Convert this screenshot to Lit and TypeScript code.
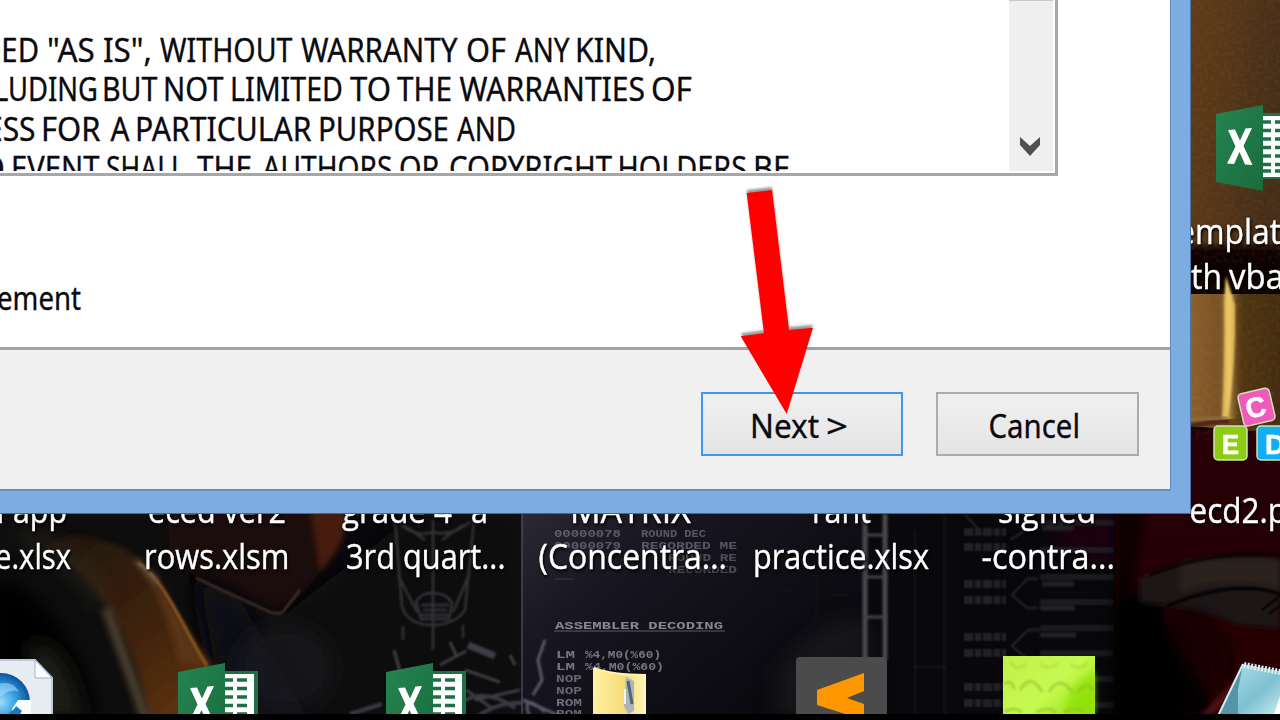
import { LitElement, html, svg, css } from "lit";
import { customElement, property } from "lit/decorators.js";

type Word = [string, number, number];

/** One line of dialog text; each word is fitted between its start and end. */
@customElement("fit-line")
class FitLine extends LitElement {
  @property({ attribute: false }) words: Word[] = [];
  @property({ type: Number }) baseline = 30;
  @property({ type: Number }) box = 40;

  static styles = css`
    :host { display: block; }
    svg { display: block; width: 100%; overflow: visible; }
    text { font-family: "Noto Sans", "Open Sans", sans-serif; font-size: 33.5px; fill: #0a0a10; stroke: #0a0a10; stroke-width: 0.35px; }
  `;

  render() {
    return html`<svg height=${this.box}>
      ${this.words.map(([t, a, b]) => svg`<text x=${a} y=${this.baseline} textLength=${b - a} lengthAdjust="spacingAndGlyphs">${t}</text>`)}
    </svg>`;
  }
}

const license: Word[][] = [
  [["DED", -20, 39], ['"AS IS",', 47, 152], ["WITHOUT", 160, 292.5], ["WARRANTY", 301, 457.5], ["OF", 466, 506], ["ANY", 515, 569.5], ["KIND,", 575, 656]],
  [["LUDING", -6, 98], ["BUT", 102, 157.5], ["NOT", 163, 223.500], ["LIMITED", 230, 343], ["TO", 350, 391], ["THE", 397, 452], ["WARRANTIES", 459.5, 645], ["OF", 651, 692]],
  [["ESS", -14, 35.5], ["FOR", 41, 100.5], ["A", 110.5, 129.5], ["PARTICULAR", 135, 311.5], ["PURPOSE", 318, 449], ["AND", 457, 516]],
  [["O", -21, 5], ["EVENT", 11, 99.5], ["SHALL", 106, 185], ["THE", 197, 252], ["AUTHORS", 262.5, 392.5], ["OR", 399, 439.5], ["COPYRIGHT", 449, 612], ["HOLDERS", 617.5, 747], ["BE", 753, 790]],
];

const excel = (x: number, y: number) => svg`
  <g transform="translate(${x} ${y})">
    <rect x="44" y="9" width="36" height="66" fill="#1e7145"/>
    <rect x="44" y="12" width="32" height="61" fill="#fff"/>
    <path d="M47 18h8M47 26.500h8M47 35h8M47 43.500h8M47 52h8M47 60.500h8M47 67h8M59 18h10M59 26.500h10M59 35h10M59 43.500h10M59 52h10M59 60.500h10M59 67h10" stroke="#1e7145" stroke-width="3.600"/>
    <path d="M0 10L47 1V87L0 78Z" fill="url(#xl)"/>
    <path d="M12 26l7-.5 5 11 5.500-12 6.500-.5-8.500 18 9 19-7.500-.5-5.500-12.500-5.500 12-7-.5 8.500-17z" fill="#fff"/>
  </g>`;

const labels: [string, number, number, number][] = [
  ["n", -14, 4, 523], ["app", 13, 67, 523], ["eced ver2", 148, 286, 523],
  ["grade 4", 342, 452, 523], ["a", 471, 488, 523], ["MATRIX", 570, 691, 523],
  ["rant", 812, 871, 523], ["signed", 998, 1096, 523],
  ["e.xlsx", -5, 71, 568.5], ["rows.xlsm", 144, 289.500, 568.5], ["3rd quart...", 346, 505.5, 568.5],
  ["(Concentra...", 538.500, 727, 568.5], ["practice.xlsx", 753, 929, 568.5], ["-contra...", 981.5, 1115, 568.5],
  ["emplate", 1177, 1299, 243.5], ["th", 1191, 1222, 288.5], ["vba", 1229, 1284, 288.5],
  ["ecd2.p", 1189.5, 1287, 523],
];

const code: [string, number, number, number, number][] = [
  ["00000078", 554, 621, 537, 0.4], ["ROUND DEC", 641, 706, 537, 0.4],
  ["00000079", 554, 621, 549, 0.4], ["RECORDED ME", 641, 737, 549, 0.4],
  ["ROUND RE", 668, 737, 561, 0.35], ["RECORDED", 668, 737, 573, 0.35],
  ["LM", 556, 575, 658, 0.6], ["%4,M0(%60)", 585, 661, 658, 0.6],
  ["LM", 556, 575, 670, 0.6], ["%4,M0(%60)", 585, 664, 670, 0.6],
  ["NOP", 556, 582, 682, 0.5], ["NOP", 556, 582, 694, 0.5],
  ["ROM", 556, 582, 706, 0.55], ["ROM", 556, 582, 717, 0.5],
];

@customElement("app-root")
class AppRoot extends LitElement {
  static styles = css`
    :host { display: block; position: relative; width: 1280px; height: 720px; overflow: hidden; background: #08070b; }
    .desktop { position: absolute; inset: 0; display: block; }
    .desktop .label { font-family: "Open Sans", "Noto Sans", sans-serif; font-size: 34.5px; fill: #fff; stroke: #fff; stroke-width: 0.4px; filter: drop-shadow(1px 2px 1.5px #000); }
    .desktop .code { font-family: "Liberation Mono", monospace; font-weight: bold; font-size: 10.500px; fill: #b9b7c4; filter: blur(0.6px); }
    .desktop .tile { font-family: "Liberation Sans", sans-serif; font-weight: bold; fill: #fff; stroke: #fff; stroke-width: 0.6px; }
    .window { position: relative; box-sizing: border-box; width: 1191px; height: 514px; padding: 0 19.500px 24px 0; background: #7cace2; border-right: 1px solid #4d76a5; border-bottom: 1px solid #46668f; }
    .client { box-sizing: border-box; height: 491px; display: flex; flex-direction: column; background: #fff; border-right: 1px solid #618bbd; border-bottom: 2px solid #668eb9; }
    .page { height: 347px; flex: none; }
    .license { box-sizing: border-box; width: 1058px; height: 176px; display: flex; border-right: 3px solid #a7a7a7; border-bottom: 3px solid #a7a7a7; }
    .copy { flex: 1; height: 171px; padding-top: 24px; box-sizing: border-box; overflow: hidden; }
    .copy fit-line { height: 39.3px; }
    .scroll { box-sizing: border-box; width: 44px; height: 171px; margin-right: 2px; background: #efefef; border-top: 1px solid #c8c8c8; display: flex; align-items: flex-end; justify-content: center; padding: 0 3px 15px 0; }
    .accept { padding-top: 103px; }
    .footer { flex: 1; box-sizing: border-box; display: flex; justify-content: flex-end; gap: 33px; padding: 42px 31px 0 0; border-top: 3px solid #a3a3a3; background: #f0f0f0; }
    .button { box-sizing: border-box; width: 202.500px; height: 64px; margin: 0; padding: 0; border: 2px solid #acacac; background: linear-gradient(#f0f0f0, #e4e4e4); text-align: left; }
    .button.primary { border-color: #3c97f2; }
    .arrow { position: absolute; left: 730px; top: 180px; display: block; filter: drop-shadow(0 -3px 1px rgba(0, 0, 0, 0.4)); }
    .bottom { position: absolute; inset: 714px 0 0 0; background: #000; }
  `;

  wallpaper() {
    return svg`
      <defs>
        <linearGradient id="xl" x2="1" y2="1"><stop stop-color="#248551"/><stop offset="1" stop-color="#1a6b3d"/></linearGradient>
        <linearGradient id="wood" x2="1" y2=".3"><stop stop-color="#603c15"/><stop offset=".5" stop-color="#543518"/><stop offset="1" stop-color="#452d17"/></linearGradient>
        <linearGradient id="gold" x2="1"><stop stop-color="#8a602b"/><stop offset=".35" stop-color="#765024"/><stop offset=".6" stop-color="#4f340f"/><stop offset="1" stop-color="#432b10"/></linearGradient>
        <linearGradient id="beam" x2="1"><stop stop-color="#7a5522" stop-opacity="0"/><stop offset=".5" stop-color="#f3d070"/><stop offset="1" stop-color="#71501f" stop-opacity="0"/></linearGradient>
        <linearGradient id="horn" x1="0" y1="0" x2=".7" y2="1"><stop stop-color="#1f160b"/><stop offset=".6" stop-color="#3d220d"/><stop offset="1" stop-color="#5c3110"/></linearGradient>
        <linearGradient id="slate" x2="1" y2=".7"><stop stop-color="#2b2933"/><stop offset=".3" stop-color="#181722"/><stop offset="1" stop-color="#07070b"/></linearGradient>
        <linearGradient id="red" y2="1" x2="0"><stop stop-color="#270006"/><stop offset="1" stop-color="#210003"/></linearGradient>
        <radialGradient id="orb"><stop stop-color="#9bdcff"/><stop offset=".55" stop-color="#2f9ade"/><stop offset="1" stop-color="#0b539e"/></radialGradient>
        <linearGradient id="note" x2="1" y2="1"><stop stop-color="#b9e5ee"/><stop offset=".6" stop-color="#7dc0d0"/><stop offset="1" stop-color="#d6f1f5"/></linearGradient>
        <linearGradient id="lime" x2="1" y2=".7"><stop stop-color="#c2ef4b"/><stop offset=".6" stop-color="#c6fa50"/><stop offset="1" stop-color="#9be313"/></linearGradient>
        <linearGradient id="zip" x2="1"><stop stop-color="#fff0a3"/><stop offset=".6" stop-color="#f5dc76"/><stop offset="1" stop-color="#fff6be"/></linearGradient>
        <filter id="b1"><feGaussianBlur stdDeviation="1"/></filter>
        <filter id="b3" x="-30%" y="-30%" width="160%" height="160%"><feGaussianBlur stdDeviation="3"/></filter>
        <filter id="b9" x="-40%" y="-40%" width="180%" height="180%"><feGaussianBlur stdDeviation="10"/></filter>
        <filter id="grain"><feTurbulence type="fractalNoise" baseFrequency=".25" numOctaves="2"/><feColorMatrix values="0 0 0 0 .7  0 0 0 0 .5  0 0 0 0 .3  .6 0 0 0 -.2"/></filter>
        <clipPath id="left"><rect y="510" width="522" height="210"/></clipPath>
      </defs>
      <rect width="1280" height="720" fill="#09080c"/>
      <g clip-path="url(#left)">
        <path d="M0 510H170L230 720H0Z" fill="#100f0c" filter="url(#b9)"/>
        <path d="M-10 575Q65 590 100 720H-10Z" fill="#000" filter="url(#b9)"/>
        <path d="M30 640Q70 640 85 720H30Z" fill="#1a1a15" filter="url(#b9)"/>
        <path d="M170 510H350Q330 575 280 614L168 563Z" fill="#1a0f0a" filter="url(#b3)"/>
        <path d="M310 510H352Q340 555 320 572Z" fill="#451f07" filter="url(#b3)"/>
        <path d="M190 575L280 618L420 510H522V720H215Z" fill="#0b0a10" filter="url(#b9)"/>
        <path d="M200 580L240 600L310 720H225Z" fill="#101019" filter="url(#b9)"/>
        <ellipse cx="285" cy="668" rx="50" ry="45" fill="#1b1a24" opacity=".6" filter="url(#b9)"/>
        <path d="M196 578L270 612Q282 616 286 608L300 590" fill="none" stroke="#43302a" stroke-width="2.500" filter="url(#b1)"/>
        <path d="M75 535Q130 545 138 560L215 670L205 720H148Q128 600 45 545Z" fill="url(#horn)" filter="url(#b3)"/>
        <path d="M140 565C165 580 181 625 205 664L180 664Q165 600 140 565Z" fill="#5a3413" filter="url(#b3)"/>
        <path d="M138 563C165 580 181 625 207 666" fill="none" stroke="#8a5620" stroke-width="3" filter="url(#b1)"/>
        <path d="M136 560L158 583" stroke="#6f604a" stroke-width="4" filter="url(#b3)"/>
        <path d="M106 608Q126 662 146 720" fill="none" stroke="#4a3d2e" stroke-width="10" filter="url(#b3)"/>
        <path d="M20 535Q75 550 105 605" fill="none" stroke="#332c22" stroke-width="16" opacity=".6" filter="url(#b9)"/>
      </g>
      <g fill="none" stroke="#38373e" stroke-width="2.500" filter="url(#b1)" opacity=".9">
        <path d="M395 520L402 606Q407 625 432 625Q455 625 465 610L474 520M398 575L417 612M469 575L453 612M433 520V650M398 522Q414 538 433 532Q451 537 470 522M404 525L425 540M463 525L442 540"/>
        <path d="M416 602Q420 593 432 593Q447 593 452 603L449 619H421ZM421 605H449M423 610H447M421 615H450M403 626V640M463 625V638"/>
        <path d="M394 650L402 678M440 665L466 651M450 642L457 657M465 670L500 682M475 700L520 690M510 655L515 665M466 690L493 709M545 640L538 660L542 680L533 695" stroke="#45434c" stroke-width="3"/>
        <path d="M468 645L495 656" stroke="#45434c" stroke-width="7"/>
        <path d="M448 716Q475 680 515 708M475 718Q510 692 560 710M350 714L382 704" stroke="#403e47" stroke-width="4"/>
      </g>
      <path d="M522 510H870V720H522Z" fill="url(#slate)"/>
      <path d="M522 510V720" stroke="#55545e" stroke-width="2" opacity=".6"/>
      <path d="M530 718Q520 690 545 712M545 640L538 660L542 680L533 695M523 700L560 716" fill="none" stroke="#5b5963" stroke-width="3" filter="url(#b1)"/>
      <path d="M805 640Q840 610 870 620V720H775V670Z" fill="#222126" opacity=".5" filter="url(#b9)"/>
      <g filter="url(#b1)">
        <path d="M865 514V660M885 514V660" stroke="#48484c" stroke-width="5"/>
        <path d="M863 535H888M863 577H888M863 617H888" stroke="#434347" stroke-width="3"/>
        <path d="M817 575V620M915 530V714M945 514V714M780 590H790M830 595H846M915 667H945" stroke="#141419" stroke-width="3"/>
      </g>
      ${code.map(([t, a, b, y, o]) => svg`<text class="code" x=${a} y=${y} textLength=${b - a} lengthAdjust="spacingAndGlyphs" opacity=${o}>${t}</text>`)}
      <text class="code" x="555" y="629" textLength="168" lengthAdjust="spacingAndGlyphs" opacity=".7">ASSEMBLER DECODING</text>
      <path d="M554 631H725" stroke="#a7a5b0" opacity=".5"/>
      <path d="M554 579H574" stroke="#67656f" opacity=".4"/>
      <rect x="958" y="510" width="158" height="204" fill="#08070b"/>
      <path d="M1040 510H1116V570L1060 545Z" fill="#1c0609" filter="url(#b9)"/>
      <g stroke="#232228" fill="none" filter="url(#b1)">
        ${[532, 547, 584, 600, 637, 653, 687, 703].map((y) => svg`<path d="M964 ${y}H1006" stroke-width="8" stroke-dasharray="9 2 6 2"/>`)}
        ${[523, 550, 577, 602, 628, 653, 679, 705].map((y) => svg`<path d="M1040 ${y}H1114" stroke-width="6" opacity=".75"/>`)}
        <path d="M1042 584H1074M1040 608H1075M1040 635H1076M1042 528H1074" stroke-width="5"/>
        <path d="M965 514L982 534M1012 595L1027 579H1038M1012 595L1027 608H1038M1012 646L1028 630H1040M1012 646L1025 657M1010 540L1026 530" stroke-width="2.500"/>
      </g>
      <path d="M1116 430H1280V720H1116Z" fill="url(#red)"/>
      <path d="M1116 510H1145L1130 600H1116Z" fill="#0c0002" filter="url(#b3)"/>
      <path d="M1116 585L1150 600L1225 720H1116Z" fill="#030001" filter="url(#b9)"/>
      <path d="M1116 600H1160L1180 720H1116Z" fill="#030001" filter="url(#b3)"/>
      <path d="M1140 578Q1210 549 1280 558V628L1240 626Q1190 604 1140 603Z" fill="#1f1814" filter="url(#b3)"/>
      <path d="M1180 563Q1230 554 1280 560V590Q1230 575 1180 592Z" fill="#29221d" filter="url(#b3)"/>
      <path d="M1150 575Q1210 549 1280 556" stroke="#080304" stroke-width="3" fill="none" filter="url(#b1)"/>
      <path d="M1167 606Q1235 578 1280 594" stroke="#050405" stroke-width="3" fill="none" filter="url(#b1)"/>
      <path d="M1262 610L1280 596M1269 614L1280 606" stroke="#0b0909" stroke-width="3" fill="none"/>
      <path d="M1180 616Q1230 622 1280 638V720H1220Z" fill="#250006" filter="url(#b3)"/>
      <path d="M1185 618Q1230 655 1218 688" stroke="#080002" stroke-width="20" fill="none" filter="url(#b9)"/>
      <path d="M1202 720L1248 672" stroke="#5a161d" stroke-width="7" filter="url(#b3)"/>
      <path d="M1224 455V580" stroke="#4d1016" stroke-width="3" filter="url(#b1)" opacity=".6"/>
      <path d="M1190 0H1280V250H1190Z" fill="url(#wood)"/>
      <rect x="1188" y="246" width="92" height="46" fill="#0c0302" filter="url(#b3)"/>
      <path d="M1190 294H1280V433L1190 426Z" fill="url(#gold)"/>
      <rect x="1190" width="90" height="240" filter="url(#grain)" opacity=".22"/>
      <rect x="1190" y="294" width="90" height="132" filter="url(#grain)" opacity=".22"/>
      <path d="M1226 276L1235 305Q1236 365 1228 418H1222Q1225 360 1224 300Z" fill="#eac35e" filter="url(#b1)"/>
      <rect x="1217" y="294" width="24" height="125" fill="url(#beam)" opacity=".5"/>
      <path d="M1190 426Q1210 422 1229 421" stroke="#4d2813" stroke-width="5" fill="none" filter="url(#b1)"/>
      <path d="M1190 420L1227 417" stroke="#967246" stroke-width="2" filter="url(#b1)"/>
    `;
  }

  icons() {
    return svg`
      ${excel(1216, 104)} ${excel(178, 662)} ${excel(386, 662)}
      <path d="M-5 660H35L52 678V720H-5Z" fill="#e7ebf2" stroke="#bfcbd8" stroke-width="2"/>
      <path d="M35 660V678H52Z" fill="#f9fcff" stroke="#a6b2c3"/>
      <circle cx="1" cy="702" r="29" fill="url(#orb)"/>
      <path d="M-2 684Q13 680 19 692Q10 688 0 697Z" fill="#b3e7ff" opacity=".5"/>
      <path d="M12 720V709L18 700H31V720Z" fill="#f9fcff"/>
      <path d="M9 713Q15 709 16 706L22 711L16 720H8Z" fill="#197abf"/>
      <path d="M593 668Q612 675 646 674V720H593Z" fill="url(#zip)"/>
      <path d="M594 668Q612 675 646 675" fill="none" stroke="#fff3ab" stroke-width="2"/>
      <path d="M626 677L634 681V711L628 714L624 706Z" fill="#a9b4bb"/>
      <path d="M628 681L632 704" stroke="#56636b" stroke-width="3"/>
      <path d="M625 689V704" stroke="#eef4f8" stroke-width="2"/>
      <rect x="796" y="657" width="91" height="70" rx="4" fill="#4b4b4b"/>
      <path d="M864 673V691L847 698L864 704V720L817 705V690Z" fill="#ff9800"/>
      <rect x="1003" y="656" width="92" height="64" fill="url(#lime)"/>
      <path d="M1095 672Q1065 685 1065 714H1095Z" fill="#8cdf04" opacity=".65" filter="url(#b3)"/>
      <g fill="none" stroke="#8fc02f" stroke-width="3" opacity=".6" filter="url(#b1)">
        <path d="M1004 684Q1012 679 1014 689M1020 690Q1031 672 1042 692M1049 692Q1060 674 1072 692M1077 693Q1086 680 1094 690M1004 712Q1013 706 1022 712M1036 712Q1048 706 1056 712M1064 712Q1078 706 1084 712"/>
        <path opacity=".5" d="M1010 662Q1017 672 1026 664M1040 664Q1050 671 1058 663M1070 664Q1080 672 1088 662"/>
      </g>
      <path d="M1243 664L1280 671V720H1217Z" fill="url(#note)"/>
      <path d="M1243 664L1217 720H1238V690Z" fill="#5594a7"/>
      <path d="M1243 664L1217 718" stroke="#d4edf0" stroke-width="2"/>
      <path d="M1244 665L1280 672" stroke="#e4eef0" stroke-width="6" stroke-dasharray="2 1.500"/>
      <path d="M1280 696L1274 714H1280Z" fill="#fff"/>
      <g stroke="#d5dfb8" stroke-width="1.500">
        <rect x="1214" y="426" width="33" height="34" rx="4" fill="#8dcc13"/>
        <rect x="1257" y="426" width="36" height="34" rx="4" fill="#12aef4"/>
        <rect x="1240.500" y="390.500" width="32" height="33" rx="4" fill="#ef5abb" transform="rotate(-13 1257 407)"/>
      </g>
      <text class="tile" x="1222" y="453.500" font-size="28" textLength="17" lengthAdjust="spacingAndGlyphs">E</text>
      <text class="tile" x="1265" y="453.500" font-size="28">D</text>
      <text class="tile" x="1245.500" y="417" font-size="28" transform="rotate(-13 1256 407)">C</text>
    `;
  }

  render() {
    return html`
      <svg class="desktop" width="1280" height="720" viewBox="0 0 1280 720">
        ${this.wallpaper()}${this.icons()}
        ${labels.map(([t, a, b, y]) => svg`<text class="label" x=${a} y=${y} textLength=${b - a} lengthAdjust="spacingAndGlyphs">${t}</text>`)}
      </svg>
      <section class="window">
        <div class="client">
          <div class="page">
            <div class="license">
              <div class="copy">
                ${license.map((words) => html`<fit-line .words=${words} baseline="37.6"></fit-line>`)}
              </div>
              <div class="scroll">
                <svg width="20" height="19"><path d="M0 0L10 9L20 0V8L10 19L0 8Z" fill="#505050"/></svg>
              </div>
            </div>
            <div class="accept"><fit-line .words=${[["ement", -3, 81]]} baseline="30.500"></fit-line></div>
          </div>
          <div class="footer">
            <button class="button primary"><fit-line .words=${[["Next", 47, 116], [">", 123, 145]]} baseline="43.500" box="60"></fit-line></button>
            <button class="button"><fit-line .words=${[["Cancel", 50.5, 142]]} baseline="43.500" box="60"></fit-line></button>
          </div>
        </div>
      </section>
      <svg class="arrow" width="95" height="245"><path d="M16.700 13L42 10L59 150L83 147.700L56.700 234L10.700 156.300L34 153.300Z" fill="#f00"/></svg>
      <div class="bottom"></div>
    `;
  }
}
